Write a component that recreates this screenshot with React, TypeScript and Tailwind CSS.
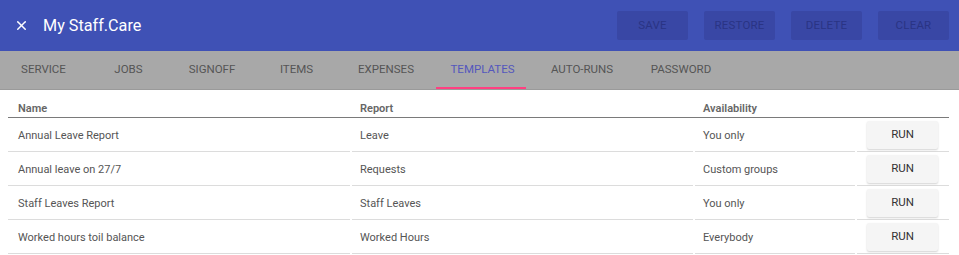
import { X } from 'lucide-react';

interface Template {
    name: string;
    report: string;
    availability: string;
}

const templates: Template[] = [
    { name: 'Annual Leave Report', report: 'Leave', availability: 'You only' },
    { name: 'Annual leave on 27/7', report: 'Requests', availability: 'Custom groups' },
    { name: 'Staff Leaves Report', report: 'Staff Leaves', availability: 'You only' },
    { name: 'Worked hours toil balance', report: 'Worked Hours', availability: 'Everybody' },
];

const tabs = [
    { label: 'SERVICE', w: 'w-[87px]' },
    { label: 'JOBS', w: 'w-[83px]' },
    { label: 'SIGNOFF', w: 'w-[84px]' },
    { label: 'ITEMS', w: 'w-[85px]' },
    { label: 'EXPENSES', w: 'w-[94px]' },
    { label: 'TEMPLATES', w: 'w-[99px]' },
    { label: 'AUTO-RUNS', w: 'w-[100px]' },
    { label: 'PASSWORD', w: 'w-[98px]' },
];

const actions = ['SAVE', 'RESTORE', 'DELETE', 'CLEAR'];

export default function App() {
    return (
        <div className="h-[255px] w-[959px] overflow-hidden bg-white font-['Roboto',sans-serif]">
            {/* top bar */}
            <div className="flex h-[51px] items-center bg-[#3f51b5] pr-[10px] pl-[14px]">
                <X className="h-[15px] w-[15px] text-white" strokeWidth={2.4} />
                <div className="ml-[14px] text-[16.2px] leading-[20px] text-white">
                    My Staff.Care
                </div>
                <div className="ml-auto flex gap-[16px]">
                    {actions.map((a) => (
                        <button
                            key={a}
                            className="h-[29px] w-[71px] rounded-[2px] bg-[#3947a5] text-[11.5px] tracking-[0.2px] text-[#2a3484]"
                        >
                            {a}
                        </button>
                    ))}
                </div>
            </div>

            {/* tabs */}
            <div className="flex h-[39px] border-b border-[#9a9a9a] bg-[#a8a8a8]">
                {tabs.map((t) => {
                    const active = t.label === 'TEMPLATES';
                    return (
                        <div
                            key={t.label}
                            className={`relative flex items-center justify-center text-[11.5px] ${t.w} ${
                                active ? 'text-[#5457bd]' : 'text-[#555]'
                            }`}
                        >
                            {t.label}
                            {active && (
                                <div className="absolute right-[6px] bottom-0 left-[3px] h-[2px] bg-[#ff4081]" />
                            )}
                        </div>
                    );
                })}
            </div>

            {/* table */}
            <div className="px-[8px] pr-[10px]">
                <div className="flex h-[28px] items-end border-b border-[#7a7a7a] pb-[2px] text-[11px] leading-[13px] font-semibold text-[#666]">
                    <div className="w-[344px] pl-[10px]">Name</div>
                    <div className="w-[343px] pl-[8px]">Report</div>
                    <div className="pl-[8px]">Availability</div>
                </div>
                {templates.map((t) => (
                    <div key={t.name} className="flex h-[34px] gap-[2px] text-[11px] text-[#555]">
                        <div className="flex w-[342px] items-center border-b border-[#dcdcdc] pt-[4px] pl-[10px]">
                            {t.name}
                        </div>
                        <div className="flex w-[341px] items-center border-b border-[#dcdcdc] pt-[4px] pl-[8px]">
                            {t.report}
                        </div>
                        <div className="flex w-[160px] items-center border-b border-[#dcdcdc] pt-[4px] pl-[8px]">
                            {t.availability}
                        </div>
                        <div className="flex flex-1 items-center border-b border-[#dcdcdc] pl-[10px]">
                            <button className="h-[28px] w-[71px] rounded-[2px] bg-[#f5f5f5] text-[11.5px] text-[#333] shadow-[0_1px_2px_rgba(0,0,0,0.18)]">
                                RUN
                            </button>
                        </div>
                    </div>
                ))}
            </div>
        </div>
    );
}
